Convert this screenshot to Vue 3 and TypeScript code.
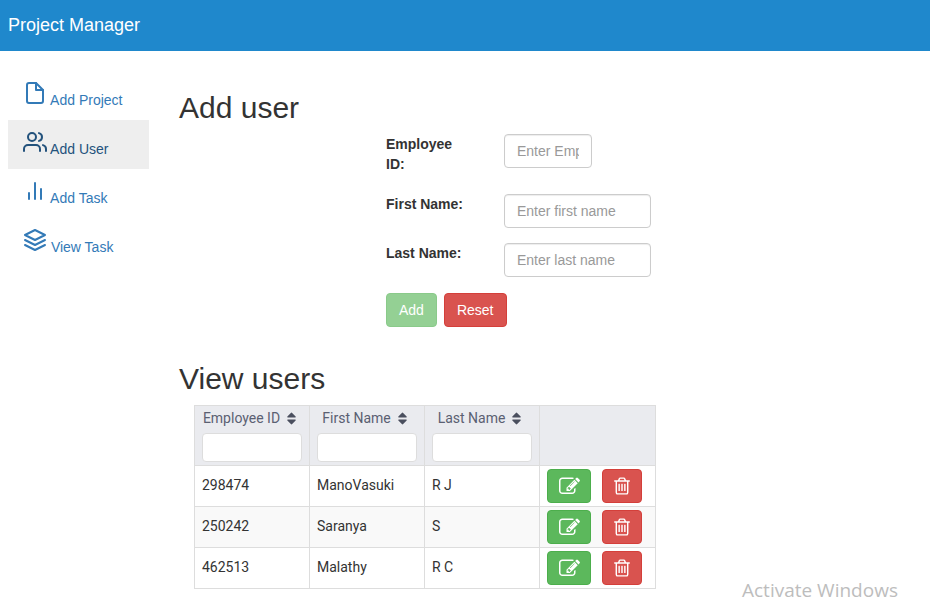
<script setup lang="ts">
import { ref } from 'vue'

interface User {
  id: string
  firstName: string
  lastName: string
}

const navItems = [
  { label: 'Add Project', icon: 'file' },
  { label: 'Add User', icon: 'users', active: true },
  { label: 'Add Task', icon: 'chart' },
  { label: 'View Task', icon: 'layers' }
]

const columns = ['Employee ID', 'First Name', 'Last Name']

const users = ref<User[]>([
  { id: '298474', firstName: 'ManoVasuki', lastName: 'R J' },
  { id: '250242', firstName: 'Saranya', lastName: 'S' },
  { id: '462513', firstName: 'Malathy', lastName: 'R C' }
])

// form
const employeeId = ref('')
const firstName = ref('')
const lastName = ref('')
</script>

<template>
  <div class="page">
    <header class="topbar">Project Manager</header>

    <div class="layout">
      <nav class="sidebar">
        <a
          v-for="item in navItems"
          :key="item.label"
          href="#"
          class="nav-link"
          :class="{ 'nav-link--active': item.active }"
        >
          <svg class="nav-icon" viewBox="0 0 24 24">
            <template v-if="item.icon === 'file'">
              <path d="M13 2H6a2 2 0 0 0-2 2v16a2 2 0 0 0 2 2h12a2 2 0 0 0 2-2V9z" />
              <polyline points="13 2 13 9 20 9" />
            </template>
            <template v-else-if="item.icon === 'users'">
              <path d="M17 21v-2a4 4 0 0 0-4-4H5a4 4 0 0 0-4 4v2" />
              <circle cx="9" cy="7" r="4" />
              <path d="M23 21v-2a4 4 0 0 0-3-3.87" />
              <path d="M16 3.13a4 4 0 0 1 0 7.75" />
            </template>
            <template v-else-if="item.icon === 'chart'">
              <line x1="18" y1="20" x2="18" y2="10" />
              <line x1="12" y1="20" x2="12" y2="4" />
              <line x1="6" y1="20" x2="6" y2="14" />
            </template>
            <template v-else>
              <polygon points="12 2 2 7 12 12 22 7 12 2" />
              <polyline points="2 17 12 22 22 17" />
              <polyline points="2 12 12 17 22 12" />
            </template>
          </svg>
          {{ item.label }}
        </a>
      </nav>

      <main class="main">
        <h2 class="heading">Add user</h2>

        <form class="user-form" @submit.prevent>
          <div class="form-row">
            <label class="form-label">Employee ID:</label>
            <input v-model="employeeId" class="form-input form-input--short" placeholder="Enter Employee ID" />
          </div>
          <div class="form-row">
            <label class="form-label">First Name:</label>
            <input v-model="firstName" class="form-input" placeholder="Enter first name" />
          </div>
          <div class="form-row">
            <label class="form-label">Last Name:</label>
            <input v-model="lastName" class="form-input" placeholder="Enter last name" />
          </div>
          <div class="form-actions">
            <button class="btn btn--success" disabled>Add</button>
            <button class="btn btn--danger" type="button">Reset</button>
          </div>
        </form>

        <h2 class="heading heading--second">View users</h2>

        <table class="users-table">
          <thead>
            <tr>
              <th v-for="col in columns" :key="col">
                <div class="th-title">
                  {{ col }}
                  <svg class="sort-icon" viewBox="0 0 1792 1792">
                    <path d="M1408 1088q0 26-19 45l-448 448q-19 19-45 19t-45-19l-448-448q-19-19-19-45t19-45 45-19h896q26 0 45 19t19 45zm0-384q0 26-19 45t-45 19h-896q-26 0-45-19t-19-45 19-45l448-448q19-19 45-19t45 19l448 448q19 19 19 45z" />
                  </svg>
                </div>
                <input class="filter-input" />
              </th>
              <th></th>
            </tr>
          </thead>
          <tbody>
            <tr v-for="user in users" :key="user.id">
              <td>{{ user.id }}</td>
              <td>{{ user.firstName }}</td>
              <td>{{ user.lastName }}</td>
              <td class="actions">
                <button class="btn btn--success btn--edit">
                  <svg class="action-icon action-icon--edit" viewBox="0 0 1792 1792">
                    <path d="M888 1184l116-116-152-152-116 116v56h96v96h56zm440-720q-16-16-33 1l-350 350q-17 17-1 33t33-1l350-350q17-17 1-33zm80 594v190q0 119-84.5 203.5t-203.5 84.5h-832q-119 0-203.5-84.5t-84.5-203.5v-832q0-119 84.5-203.5t203.5-84.5h832q63 0 117 25 15 7 18 23 3 17-9 29l-49 49q-14 14-32 8-23-6-45-6h-832q-66 0-113 47t-47 113v832q0 66 47 113t113 47h832q66 0 113-47t47-113v-126q0-13 9-22l64-64q15-15 35-7t20 29zm-96-738l288 288-672 672h-288v-288zm444 132l-92 92-288-288 92-92q28-28 68-28t68 28l152 152q28 28 28 68t-28 68z" />
                  </svg>
                </button>
                <button class="btn btn--danger btn--trash">
                  <svg class="action-icon" viewBox="0 0 1792 1792">
                    <path d="M704 736v576q0 14-9 23t-23 9h-64q-14 0-23-9t-9-23v-576q0-14 9-23t23-9h64q14 0 23 9t9 23zm256 0v576q0 14-9 23t-23 9h-64q-14 0-23-9t-9-23v-576q0-14 9-23t23-9h64q14 0 23 9t9 23zm256 0v576q0 14-9 23t-23 9h-64q-14 0-23-9t-9-23v-576q0-14 9-23t23-9h64q14 0 23 9t9 23zm128 724v-948h-896v948q0 22 7 40.5t14.5 27 10.5 8.5h832q3 0 10.5-8.5t14.5-27 7-40.5zm-672-1076h448l-48-117q-7-9-17-11h-317q-10 2-17 11zm928 32v64q0 14-9 23t-23 9h-96v948q0 83-47 143.5t-113 60.5h-832q-66 0-113-58.5t-47-141.5v-952h-96q-14 0-23-9t-9-23v-64q0-14 9-23t23-9h309l70-167q15-37 54-63t79-26h320q40 0 79 26t54 63l70 167h309q14 0 23 9t9 23z" />
                  </svg>
                </button>
              </td>
            </tr>
          </tbody>
        </table>
      </main>
    </div>

    <div class="watermark">Activate Windows</div>
  </div>
</template>

<style>
html,
body {
  margin: 0;
  overflow: hidden;
}
</style>

<style scoped>
.page {
  position: relative;
  height: 597px;
  overflow: hidden;
  font-family: 'Liberation Sans', Arial, sans-serif;
  font-size: 14px;
  line-height: 20px;
  color: #333;
  background: #fff;
}

.topbar {
  height: 51px;
  padding-left: 8px;
  font-size: 18px;
  line-height: 50px;
  color: #fff;
  background-color: #1f88cc;
}

.layout {
  display: flex;
  padding: 20px 0 0 8px;
}

.sidebar {
  width: 141px;
  flex-shrink: 0;
}

.nav-link {
  display: block;
  padding: 10px 15px;
  color: #337ab7;
  text-decoration: none;
}

.nav-link--active {
  color: #23527c;
  background-color: #eee;
}

.nav-icon {
  width: 24px;
  height: 24px;
  fill: none;
  stroke: currentColor;
  stroke-width: 2;
  stroke-linecap: round;
  stroke-linejoin: round;
}

.main {
  flex: 1;
  padding-left: 30px;
}

.heading {
  margin: 20px 0 10px;
  font-size: 30px;
  font-weight: 500;
  line-height: 33px;
  color: #333;
}

.heading--second {
  margin-top: 35px;
}

.user-form {
  display: flex;
  flex-direction: column;
  gap: 15px;
  margin-left: 207px;
}

.form-row {
  display: flex;
  align-items: flex-start;
}

.form-label {
  width: 78px;
  margin: 0 40px 5px 0;
  font-weight: 700;
}

.form-input {
  width: 147px;
  height: 34px;
  box-sizing: border-box;
  padding: 6px 12px;
  font: inherit;
  color: #555;
  border: 1px solid #ccc;
  border-radius: 4px;
  outline: none;
  box-shadow: inset 0 1px 1px rgba(0, 0, 0, 0.075);
}

.form-input--short {
  width: 88px;
}

.form-input::placeholder {
  color: #999;
  opacity: 1;
}

.form-actions {
  display: flex;
  gap: 7px;
  margin-top: 1px;
}

.btn {
  height: 34px;
  box-sizing: border-box;
  padding: 6px 12px;
  font: inherit;
  color: #fff;
  border: 1px solid transparent;
  border-radius: 4px;
}

.btn--success {
  background-color: #5cb85c;
  border-color: #4cae4c;
}

.btn--success:disabled {
  opacity: 0.65;
}

.btn--danger {
  background-color: #d9534f;
  border-color: #d43f3a;
}

.users-table {
  width: 462px;
  margin-left: 15px;
  table-layout: fixed;
  border-collapse: collapse;
  font-family: Roboto, sans-serif;
  color: #333;
}

.users-table th,
.users-table td {
  border: 1px solid #ddd;
  text-align: left;
}

.users-table th {
  width: 115px;
  height: 59px;
  box-sizing: border-box;
  padding: 2px 7px 3px;
  font-weight: 400;
  vertical-align: top;
  background-color: #eaebef;
}

.users-table th:last-child {
  width: 116px;
}

.users-table td {
  height: 41px;
  box-sizing: border-box;
  padding: 2px 7px 4px;
}

.users-table td.actions {
  padding: 3px 7px;
  white-space: nowrap;
}

.users-table tbody tr:nth-child(even) {
  background-color: #f9f9f9;
}

.th-title {
  display: flex;
  align-items: center;
  justify-content: center;
  gap: 4px;
  height: 20px;
  margin-bottom: 5px;
  padding-right: 2px;
  color: #5a6072;
}

.sort-icon {
  width: 15px;
  height: 15px;
  fill: #4a4f5e;
}

.filter-input {
  display: block;
  width: 100px;
  height: 29px;
  box-sizing: border-box;
  background: #fff;
  border: 1px solid #ddd;
  border-radius: 4px;
  outline: none;
}

.btn--edit {
  width: 44px;
  padding: 0;
  margin-right: 11px;
  vertical-align: middle;
}

.btn--trash {
  width: 40px;
  padding: 0;
  vertical-align: middle;
}

.action-icon {
  display: block;
  width: 20px;
  height: 20px;
  margin: 0 auto;
  fill: #fff;
}

.action-icon--edit {
  width: 21px;
  height: 21px;
}

.watermark {
  position: absolute;
  left: 742px;
  top: 583px;
  font-family: 'Open Sans', sans-serif;
  font-size: 19px;
  line-height: 14px;
  color: #bdbdbd;
  white-space: nowrap;
}
</style>
